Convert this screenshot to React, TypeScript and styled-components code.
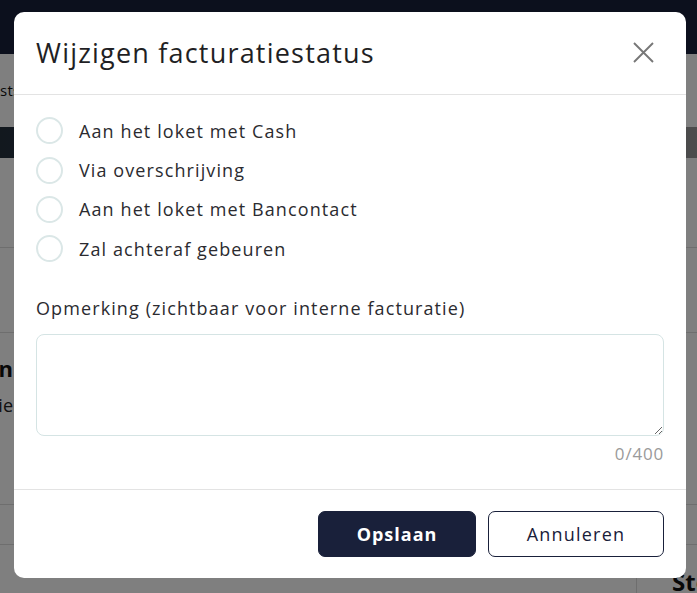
import React, { useState } from "react";
import styled, { createGlobalStyle } from "styled-components";

const GlobalStyle = createGlobalStyle`
  html, body { margin: 0; padding: 0; }
  body {
    font-family: "Open Sans", "Noto Sans", sans-serif;
    background: #ffffff;
    width: 697px;
    height: 593px;
    overflow: hidden;
  }
  * { box-sizing: border-box; }
`;

const Page = styled.div`
  width: 697px;
  height: 593px;
  position: relative;
  overflow: hidden;
  background: #ffffff;
  font-family: "Open Sans", sans-serif;
`;

const Navbar = styled.div`
  height: 54px;
  background: #19203a;
`;

const Tabs = styled.div`
  height: 73px;
  padding: 26px 0 0 0;
  font-size: 15px;
  color: #111;
  white-space: nowrap;
  letter-spacing: 0.3px;
`;

const Banner = styled.div`
  height: 31px;
  background: linear-gradient(90deg, #24303d, #3a4652 40%, #50565c 70%, #9a9a9a);
`;

const Section = styled.div<{ $h: number }>`
  height: ${(p) => p.$h}px;
  border-bottom: 1px solid #dddddd;
`;

const InfoBlock = styled.div`
  height: 172px;
  border-bottom: 1px solid #dddddd;
  padding: 20px 0 0 0;
  width: 100%;
`;

const EdgeColumn = styled.div`
  width: 13px;
  display: flex;
  flex-direction: column;
`;

const EdgeLine = styled.div<{ $bold?: boolean }>`
  display: flex;
  justify-content: flex-end;
  white-space: nowrap;
  font-size: ${(p) => (p.$bold ? "22px" : "18px")};
  font-weight: ${(p) => (p.$bold ? 700 : 400)};
  color: ${(p) => (p.$bold ? "#111" : "#222")};
  margin-top: ${(p) => (p.$bold ? "0" : "10px")};
`;

const BottomRow = styled.div`
  display: flex;
  justify-content: flex-end;
  height: 48px;
`;

const SideCol = styled.div`
  width: 61px;
  border-left: 1px solid #dddddd;
  padding: 20px 0 0 35px;
  font-size: 24px;
  font-weight: 700;
  color: #111;
  white-space: nowrap;
`;

const Overlay = styled.div`
  position: absolute;
  inset: 0;
  background: rgba(0, 0, 0, 0.5);
  display: flex;
  align-items: flex-start;
  justify-content: flex-start;
  padding: 12px 0 0 14px;
`;

const Modal = styled.div`
  width: 672px;
  height: 566px;
  background: #ffffff;
  border-radius: 10px;
  display: flex;
  flex-direction: column;
  font-family: "Open Sans", sans-serif;
  letter-spacing: 1.1px;
`;

const Header = styled.div`
  height: 83px;
  display: flex;
  align-items: center;
  justify-content: space-between;
  padding: 0 22px 2px 22px;
  border-bottom: 1px solid #e3e3e3;
`;

const Title = styled.h2`
  margin: 0;
  font-size: 27px;
  font-weight: 400;
  color: #1f1f24;
  letter-spacing: 1.2px;
`;

const CloseButton = styled.button`
  width: 40px;
  height: 40px;
  border: none;
  background: transparent;
  padding: 0;
  margin-right: 1px;
  display: flex;
  align-items: center;
  justify-content: center;
  cursor: pointer;
`;

const Body = styled.div`
  flex: 1;
  padding: 16px 22px 0 22px;
`;

const RadioList = styled.div`
  display: flex;
  flex-direction: column;
`;

const RadioRow = styled.label`
  display: flex;
  align-items: center;
  height: 39.4px;
  gap: 16px;
  font-size: 18px;
  color: #2b2b30;
  cursor: pointer;
`;

const RadioCircle = styled.span<{ $checked: boolean }>`
  width: 27px;
  height: 27px;
  border-radius: 50%;
  border: 2px solid #dbe7e7;
  display: flex;
  align-items: center;
  justify-content: center;
  flex-shrink: 0;
  &::after {
    content: "";
    width: 13px;
    height: 13px;
    border-radius: 50%;
    background: ${(p) => (p.$checked ? "#19203a" : "transparent")};
  }
`;

const FieldLabel = styled.div`
  margin-top: 27px;
  font-size: 18px;
  color: #2b2b30;
  line-height: 24px;
`;

const TextArea = styled.textarea`
  display: block;
  margin-top: 14px;
  width: 100%;
  height: 102px;
  border: 1px solid #d5e4e4;
  border-radius: 8px;
  resize: vertical;
  font-family: inherit;
  font-size: 16px;
  padding: 10px 12px;
  outline: none;
`;

const Counter = styled.div`
  text-align: right;
  margin-top: 6px;
  font-size: 17px;
  color: #9a9a9a;
  letter-spacing: 0.8px;
`;

const Footer = styled.div`
  height: 89px;
  border-top: 1px solid #e3e3e3;
  display: flex;
  justify-content: flex-end;
  align-items: flex-start;
  gap: 12px;
  padding: 21px 22px 0 22px;
`;

const Button = styled.button<{ $primary?: boolean }>`
  height: 46px;
  width: ${(p) => (p.$primary ? "158px" : "176px")};
  border-radius: 7px;
  border: 1px solid #19203a;
  background: ${(p) => (p.$primary ? "#19203a" : "#ffffff")};
  color: ${(p) => (p.$primary ? "#ffffff" : "#19203a")};
  font-family: inherit;
  font-size: 18px;
  font-weight: ${(p) => (p.$primary ? 700 : 500)};
  letter-spacing: ${(p) => (p.$primary ? "1px" : "1.2px")};
  cursor: pointer;
`;

const options = [
  "Aan het loket met Cash",
  "Via overschrijving",
  "Aan het loket met Bancontact",
  "Zal achteraf gebeuren",
];

export default function App() {
  const [selected, setSelected] = useState<number | null>(null);
  const [text, setText] = useState("");
  return (
    <>
      <GlobalStyle />
      <Page>
        <Navbar />
        <Tabs>sts</Tabs>
        <Banner />
        <Section $h={90} />
        <Section $h={85} />
        <InfoBlock>
          <EdgeColumn>
            <EdgeLine $bold>Betalingen</EdgeLine>
            <EdgeLine>Facturatie</EdgeLine>
          </EdgeColumn>
        </InfoBlock>
        <Section $h={40} />
        <BottomRow>
          <SideCol>Sto</SideCol>
        </BottomRow>
        <Overlay>
          <Modal role="dialog">
            <Header>
              <Title>Wijzigen facturatiestatus</Title>
              <CloseButton aria-label="Sluiten">
                <svg width="21" height="21" viewBox="0 0 21 21">
                  <path d="M1 1 L20 20 M20 1 L1 20" stroke="#777777" strokeWidth="1.9" fill="none" />
                </svg>
              </CloseButton>
            </Header>
            <Body>
              <RadioList>
                {options.map((o, i) => (
                  <RadioRow key={o} onClick={() => setSelected(i)}>
                    <RadioCircle $checked={selected === i} />
                    {o}
                  </RadioRow>
                ))}
              </RadioList>
              <FieldLabel>Opmerking (zichtbaar voor interne facturatie)</FieldLabel>
              <TextArea value={text} maxLength={400} onChange={(e) => setText(e.target.value)} />
              <Counter>{text.length}/400</Counter>
            </Body>
            <Footer>
              <Button $primary>Opslaan</Button>
              <Button>Annuleren</Button>
            </Footer>
          </Modal>
        </Overlay>
      </Page>
    </>
  );
}
